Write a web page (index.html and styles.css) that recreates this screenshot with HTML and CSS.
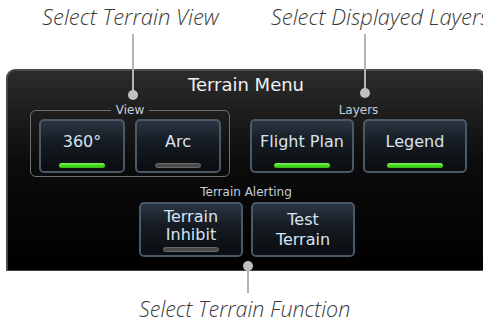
FILE: index.html
```html
<!DOCTYPE html>
<html lang="en">
<head>
    <meta charset="UTF-8">
    <meta name="viewport" content="width=device-width, initial-scale=1.0">
    <title>Terrain Menu</title>
    <link rel="stylesheet" href="styles.css">
</head>
<body>

    <div id="figure">
        <!-- Callout captions -->
        <div class="captions">
            <span class="caption">Select Terrain View</span>
            <span class="caption">Select Displayed Layers</span>
        </div>

        <div id="panel">
            <div class="title">Terrain Menu</div>

            <div class="row">
                <fieldset class="group">
                    <legend>View</legend>
                    <div class="buttons">
                        <button class="key small">
                            <span class="key-text">360°</span>
                            <span class="bar on"></span>
                        </button>
                        <button class="key small">
                            <span class="key-text">Arc</span>
                            <span class="bar off"></span>
                        </button>
                    </div>
                </fieldset>

                <div class="group plain">
                    <div class="label">Layers</div>
                    <div class="buttons wide">
                        <button class="key">
                            <span class="key-text">Flight Plan</span>
                            <span class="bar on"></span>
                        </button>
                        <button class="key">
                            <span class="key-text">Legend</span>
                            <span class="bar on"></span>
                        </button>
                    </div>
                </div>
            </div>

            <div class="alerting">
                <div class="label">Terrain Alerting</div>
                <div class="buttons alert">
                    <button class="key tall">
                        <span class="key-text two">Terrain<br>Inhibit</span>
                        <span class="bar off"></span>
                    </button>
                    <button class="key tall">
                        <span class="key-text two plain-text">Test<br>Terrain</span>
                    </button>
                </div>
            </div>
        </div>

        <div class="captions bottom">
            <span class="caption">Select Terrain Function</span>
        </div>

        <!-- Leader lines -->
        <div class="leader" style="left: 132px; top: 34px; height: 62px;"></div>
        <div class="dot" style="left: 128px; top: 90px;"></div>
        <div class="leader" style="left: 364px; top: 34px; height: 60px;"></div>
        <div class="dot" style="left: 360px; top: 88px;"></div>
        <div class="leader" style="left: 247px; top: 266px; height: 27px;"></div>
        <div class="dot" style="left: 243px; top: 261px;"></div>
    </div>

</body>
</html>
```

FILE: styles.css
```css
body {
    margin: 0;
    background-color: #fff;
    overflow: hidden;
    font-family: "DejaVu Sans", sans-serif;
}
#figure {
    position: relative;
    width: 483px;
    height: 326px;
    overflow: hidden;
}
.captions {
    height: 69px;
    display: flex;
    gap: 52px;
    padding-left: 42px;
    white-space: nowrap;
}
.captions.bottom {
    height: auto;
    padding-left: 139px;
    padding-top: 22px;
}
.caption {
    font-family: "Open Sans", sans-serif;
    font-style: italic;
    font-weight: 300;
    font-size: 22px;
    line-height: 32px;
    color: #3a3a3a;
}
.captions.bottom .caption {
    font-size: 21.5px;
}
#panel {
    box-sizing: border-box;
    margin-left: 6px;
    width: 480px;
    height: 202px;
    border: 2px solid #4a4a4a;
    border-bottom-width: 1px;
    border-radius: 9px 9px 0 0;
    background: linear-gradient(#2c2c2c, #0c0c0c 45%, #000);
}
.title {
    text-align: center;
    color: #f2f2f2;
    font-size: 18px;
    line-height: 24px;
    padding-top: 2px;
}
.row {
    display: flex;
    gap: 20px;
    padding-left: 22px;
    margin-top: 6px;
}
.group {
    margin: 0;
    padding: 2px 8px 3px 8px;
    border: 1px solid #707070;
    border-radius: 6px;
    min-width: 0;
}
.group legend {
    margin: 0 auto;
    padding: 0 5px;
    font-size: 12px;
    line-height: 14px;
    color: #c4d0dc;
}
.group.plain {
    border: none;
    padding: 0;
}
.label {
    text-align: center;
    font-size: 12px;
    line-height: 14px;
    color: #c4d0dc;
    margin-bottom: 2px;
}
.buttons {
    display: flex;
    gap: 10px;
}
.buttons.wide {
    gap: 9px;
}
.buttons.alert {
    gap: 8px;
    justify-content: center;
    padding-left: 2px;
}
.alerting {
    margin-top: 8px;
}
.alerting .label {
    margin-bottom: 3px;
}
.key {
    box-sizing: border-box;
    width: 104px;
    height: 54px;
    padding: 0;
    border: 2px solid #4b5866;
    border-radius: 5px;
    background: linear-gradient(#2b3643, #161c23 40%, #0a0d11);
    display: flex;
    flex-direction: column;
    align-items: center;
    font-family: "DejaVu Sans", sans-serif;
    color: #d8e4f0;
}
.key.small {
    width: 86px;
}
.key.tall {
    height: 55px;
}
.key-text {
    flex: 1;
    display: flex;
    align-items: center;
    justify-content: center;
    font-size: 16px;
    line-height: 20px;
}
.key-text.two {
    line-height: 18px;
    text-align: center;
}
.key-text.plain-text {
    line-height: 20px;
}
.bar {
    width: 56%;
    height: 5px;
    border-radius: 3px;
    margin-bottom: 3px;
}
.bar.on {
    background: linear-gradient(#86f266, #3fd41c 60%, #32b816);
}
.bar.off {
    box-sizing: border-box;
    background: #4a4a4a;
    border: 1px solid #6a6a6a;
}
.leader {
    position: absolute;
    width: 2px;
    background-color: #b4b4b4;
}
.dot {
    position: absolute;
    width: 10px;
    height: 10px;
    border-radius: 50%;
    background-color: #c0c0c0;
}
```
